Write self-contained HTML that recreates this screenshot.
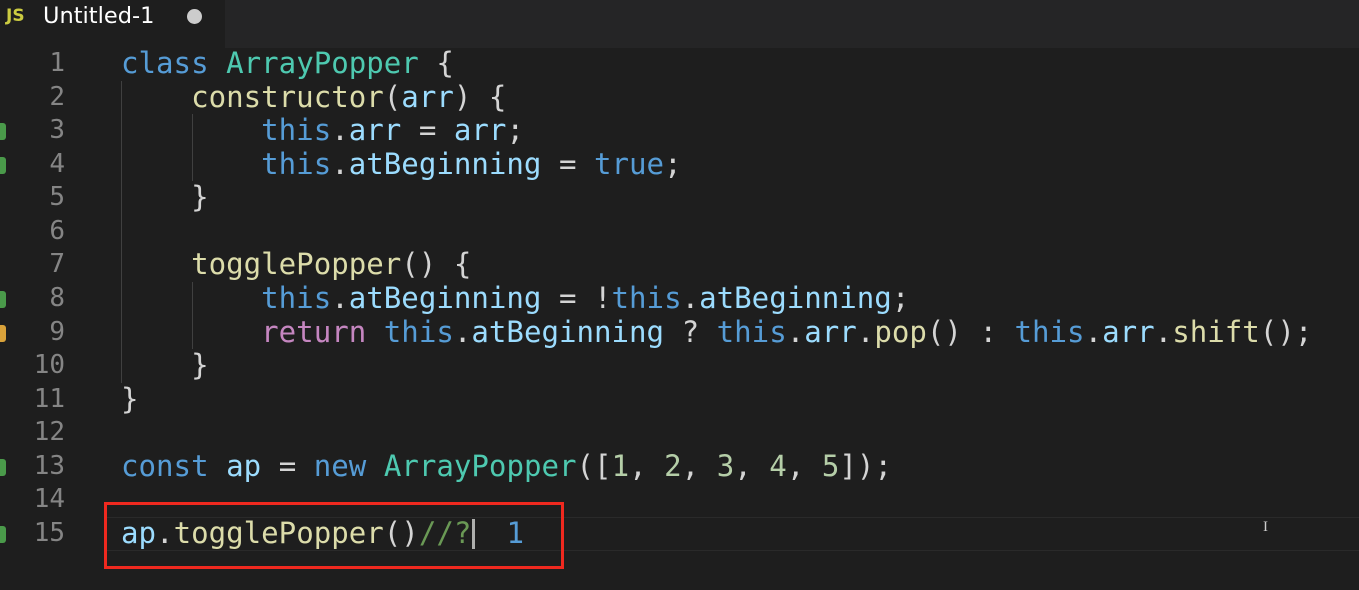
<!DOCTYPE html><html><head><style>
body{margin:0;width:1359px;height:590px;background:#1e1e1e;overflow:hidden;position:relative;font-family:"DejaVu Sans Mono",monospace}
.tabbar{position:absolute;left:0;top:0;width:1359px;height:48px;background:#252526}
.tab{position:absolute;left:0;top:0;width:225px;height:48px;background:#1e1e1e;font-family:"DejaVu Sans","Liberation Sans",sans-serif}
.tab .js{position:absolute;left:6px;top:6px;color:#cbcb41;font-weight:bold;font-size:17px}
.tab .t{position:absolute;left:43px;top:3px;color:#fff;font-size:22.5px}
.tab .dot{position:absolute;left:187px;top:9px;width:15px;height:15px;border-radius:50%;background:#ccc}
.ln{position:absolute;left:0;width:65px;text-align:right;color:#858585;font-size:26px;line-height:33.57px;height:33.57px}
.code{position:absolute;left:121px;font-size:29.1px;line-height:33.57px;white-space:pre;color:#d4d4d4;height:33.57px}
.k{color:#569cd6}.c{color:#4ec9b0}.f{color:#dcdcaa}.v{color:#9cdcfe}.p{color:#c586c0}.cm{color:#6a9955}.n{color:#b5cea8}
.g{position:absolute;left:0;width:6px;height:17px;background:#4a9a4a;border-radius:0 3px 3px 0}
.guide{position:absolute;width:1px;background:#404040}
</style></head><body>
<div class="tabbar"><div class="tab"><span class="js">JS</span><span class="t">Untitled-1</span><span class="dot"></span></div></div>
<div style="position:absolute;left:105px;top:517px;width:1254px;height:32px;border-top:1px solid #2a2a2a;border-bottom:1px solid #2a2a2a"></div>
<div class="guide" style="left:121px;top:81px;height:302px"></div>
<div class="guide" style="left:192px;top:114px;height:67px"></div>
<div class="guide" style="left:192px;top:282px;height:67px"></div>
<div style="position:absolute;left:104px;top:502px;width:454px;height:61px;border:3px solid #f0291f"></div>
<div class="g" style="top:123px"></div><div class="g" style="top:157px"></div><div class="g" style="top:291px"></div>
<div class="g" style="top:325px;background:#d9a23a"></div><div class="g" style="top:459px"></div><div class="g" style="top:526px"></div>
<div class="ln" style="top:47px">1</div><div class="ln" style="top:80.6px">2</div><div class="ln" style="top:114.1px">3</div><div class="ln" style="top:147.7px">4</div><div class="ln" style="top:181.3px">5</div><div class="ln" style="top:214.9px">6</div><div class="ln" style="top:248.4px">7</div><div class="ln" style="top:282px">8</div><div class="ln" style="top:315.6px">9</div><div class="ln" style="top:349.1px">10</div><div class="ln" style="top:382.7px">11</div><div class="ln" style="top:416.3px">12</div><div class="ln" style="top:449.8px">13</div><div class="ln" style="top:483.4px">14</div><div class="ln" style="top:517px">15</div>
<div class="code" style="top:47px"><span class="k">class</span> <span class="c">ArrayPopper</span> {</div>
<div class="code" style="top:80.6px">    <span class="f">constructor</span>(<span class="v">arr</span>) {</div>
<div class="code" style="top:114.1px">        <span class="k">this</span>.<span class="v">arr</span> = <span class="v">arr</span>;</div>
<div class="code" style="top:147.7px">        <span class="k">this</span>.<span class="v">atBeginning</span> = <span class="k">true</span>;</div>
<div class="code" style="top:181.3px">    }</div>
<div class="code" style="top:248.4px">    <span class="f">togglePopper</span>() {</div>
<div class="code" style="top:282px">        <span class="k">this</span>.<span class="v">atBeginning</span> = !<span class="k">this</span>.<span class="v">atBeginning</span>;</div>
<div class="code" style="top:315.6px">        <span class="p">return</span> <span class="k">this</span>.<span class="v">atBeginning</span> ? <span class="k">this</span>.<span class="v">arr</span>.<span class="f">pop</span>() : <span class="k">this</span>.<span class="v">arr</span>.<span class="f">shift</span>();</div>
<div class="code" style="top:349.1px">    }</div>
<div class="code" style="top:382.7px">}</div>
<div class="code" style="top:449.8px"><span class="k">const</span> <span class="v">ap</span> = <span class="k">new</span> <span class="c">ArrayPopper</span>([<span class="n">1</span>, <span class="n">2</span>, <span class="n">3</span>, <span class="n">4</span>, <span class="n">5</span>]);</div>
<div class="code" style="top:517px"><span class="v">ap</span>.<span class="f">togglePopper</span>()<span class="cm">//?</span>  <span class="k">1</span></div>
<div style="position:absolute;left:472px;top:519px;width:3px;height:30px;background:#aeafad"></div>
<div style="position:absolute;left:1263px;top:519px;color:#ccc;font-size:15px;font-family:'Liberation Serif',serif">I</div>
</body></html>
